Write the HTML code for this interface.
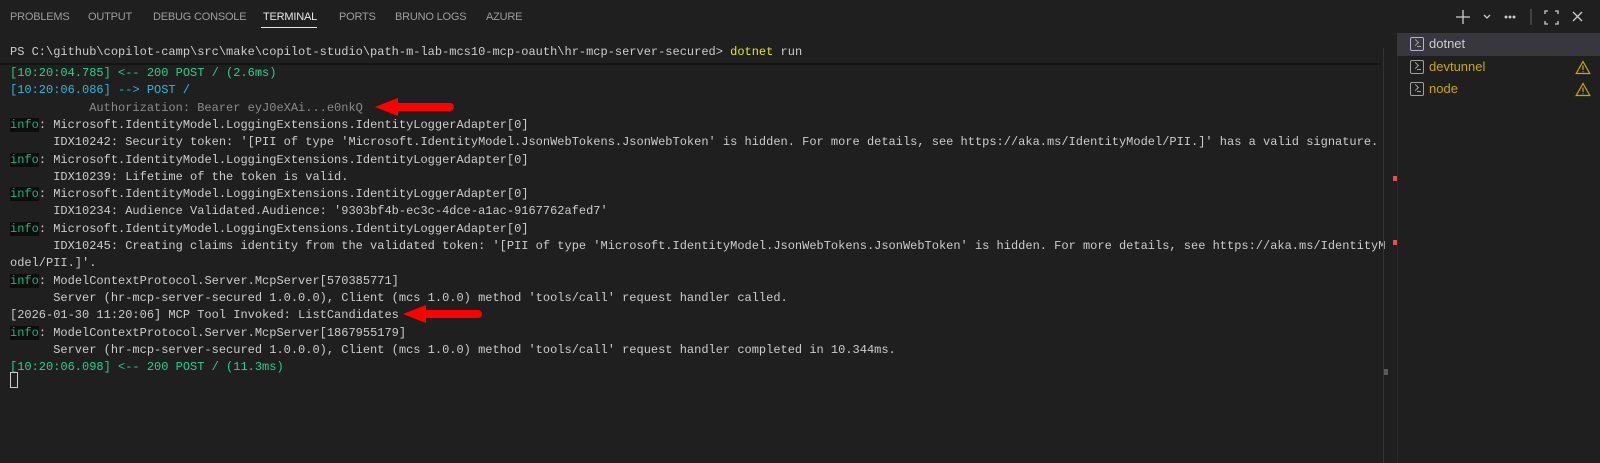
<!DOCTYPE html>
<html><head><meta charset="utf-8"><style>
body{margin:0;width:1600px;height:463px;background:#1f1f1f;overflow:hidden;position:relative;font-family:"Liberation Sans",sans-serif}
.tab{position:absolute;top:11px;font-size:11px;color:#9d9d9d;letter-spacing:-0.2px}
.tab.a{color:#e7e7e7}
.ln{position:absolute;left:10px;font-family:"Liberation Mono",monospace;font-size:12px;line-height:17px;white-space:pre;color:#cccccc}
.g{color:#23d18b}.c{color:#29b8db}.gr{color:#8b8b8b}.y{color:#e5e510}
.info{color:#0dbc79;background:#0c0c0c}
.row{position:absolute;left:1397px;width:203px;height:22px;font-size:13px;line-height:22px}
.row .t{position:absolute;left:32px}
.ic{position:absolute;left:13px;top:4px;width:12px;height:12px;border:1px solid #a0a0a0;border-radius:2px}
.ic:after{content:"";position:absolute;left:2px;top:2px;width:4px;height:4px;border-right:1.2px solid #a0a0a0;border-bottom:1.2px solid #a0a0a0;transform:rotate(-45deg)}
.ic:before{content:"";position:absolute;left:6px;top:8px;width:4px;height:1.2px;background:#a0a0a0}
.w{position:absolute;left:178px;top:4px}
</style></head><body>
<div class="tab" style="left:10px">PROBLEMS</div>
<div class="tab" style="left:88px">OUTPUT</div>
<div class="tab" style="left:153px">DEBUG CONSOLE</div>
<div class="tab a" style="left:263px">TERMINAL</div>
<div style="position:absolute;left:261px;top:27px;width:56px;height:1px;background:#e7e7e7"></div>
<div class="tab" style="left:339px">PORTS</div>
<div class="tab" style="left:395px">BRUNO LOGS</div>
<div class="tab" style="left:486px">AZURE</div>

<svg style="position:absolute;left:1455px;top:4px" width="140" height="26" viewBox="0 0 140 26" fill="none" stroke="#cccccc" stroke-width="1.3">
<path d="M8 6v14M1 13h14"/><path d="M29 11l3 3 3-3"/>
<circle cx="51" cy="13" r="0.8" fill="#ccc"/><circle cx="55" cy="13" r="0.8" fill="#ccc"/><circle cx="59" cy="13" r="0.8" fill="#ccc"/>
<path d="M76 5v16" stroke="#555"/>
<path d="M90 10V7h3M100 7h3v3M103 17v3h-3M93 20h-3v-3"/>
<path d="M118 8l9 9M127 8l-9 9"/>
</svg>

<div class="ln" style="top:44px">PS C:\github\copilot-camp\src\make\copilot-studio\path-m-lab-mcs10-mcp-oauth\hr-mcp-server-secured&gt; <span class="y">dotnet</span> run</div>
<div style="position:absolute;left:0;top:63px;width:1381px;height:2px;background:#141414"></div>
<div class="ln g" style="top:65px">[10:20:04.785] &lt;-- 200 POST / (2.6ms)</div>
<div class="ln c" style="top:82px">[10:20:06.086] --&gt; POST /</div>
<div class="ln gr" style="top:99.5px">           Authorization: Bearer eyJ0eXAi...e0nkQ</div>
<div class="ln" style="top:117px"><span class="info">info</span>: Microsoft.IdentityModel.LoggingExtensions.IdentityLoggerAdapter[0]</div>
<div class="ln" style="top:134px">      IDX10242: Security token: '[PII of type 'Microsoft.IdentityModel.JsonWebTokens.JsonWebToken' is hidden. For more details, see https://aka.ms/IdentityModel/PII.]' has a valid signature.</div>
<div class="ln" style="top:151.5px"><span class="info">info</span>: Microsoft.IdentityModel.LoggingExtensions.IdentityLoggerAdapter[0]</div>
<div class="ln" style="top:169px">      IDX10239: Lifetime of the token is valid.</div>
<div class="ln" style="top:186px"><span class="info">info</span>: Microsoft.IdentityModel.LoggingExtensions.IdentityLoggerAdapter[0]</div>
<div class="ln" style="top:203px">      IDX10234: Audience Validated.Audience: '9303bf4b-ec3c-4dce-a1ac-9167762afed7'</div>
<div class="ln" style="top:220.5px"><span class="info">info</span>: Microsoft.IdentityModel.LoggingExtensions.IdentityLoggerAdapter[0]</div>
<div class="ln" style="top:238px">      IDX10245: Creating claims identity from the validated token: '[PII of type 'Microsoft.IdentityModel.JsonWebTokens.JsonWebToken' is hidden. For more details, see https://aka.ms/IdentityM</div>
<div class="ln" style="top:255px">odel/PII.]'.</div>
<div class="ln" style="top:272.5px"><span class="info">info</span>: ModelContextProtocol.Server.McpServer[570385771]</div>
<div class="ln" style="top:290px">      Server (hr-mcp-server-secured 1.0.0.0), Client (mcs 1.0.0) method 'tools/call' request handler called.</div>
<div class="ln" style="top:307px">[2026-01-30 11:20:06] MCP Tool Invoked: ListCandidates</div>
<div class="ln" style="top:324.5px"><span class="info">info</span>: ModelContextProtocol.Server.McpServer[1867955179]</div>
<div class="ln" style="top:342px">      Server (hr-mcp-server-secured 1.0.0.0), Client (mcs 1.0.0) method 'tools/call' request handler completed in 10.344ms.</div>
<div class="ln g" style="top:359px">[10:20:06.098] &lt;-- 200 POST / (11.3ms)</div>
<div style="position:absolute;left:10px;top:372px;width:6px;height:14px;border:1px solid #cccccc"></div>

<svg style="position:absolute;left:0;top:0" width="600" height="463">
<path d="M375 107L398 98V103H450a4 4 0 0 1 0 8H398V116Z" fill="#f00"/>
<path d="M403 314L426 305V310H478a4 4 0 0 1 0 8H426V323Z" fill="#f00"/>
</svg>

<div style="position:absolute;left:1383px;top:48px;width:1px;height:415px;background:#333"></div>
<div style="position:absolute;left:1397px;top:33px;width:1px;height:430px;background:#2b2b2b"></div>
<div style="position:absolute;left:1393px;top:176px;width:4px;height:5px;background:#f14c4c"></div>
<div style="position:absolute;left:1393px;top:240px;width:4px;height:5px;background:#f14c4c"></div>
<div style="position:absolute;left:1384px;top:369px;width:4px;height:6px;background:#5a5a5a"></div>

<div class="row" style="top:33px;height:23px;background:#37373d;color:#cccccc"><span class="ic" style="border-color:#b8b0d8"></span><span class="t">dotnet</span></div>
<div class="row" style="top:56px;color:#cca700"><span class="ic"></span><span class="t">devtunnel</span><svg class="w" width="16" height="15" viewBox="0 0 16 15" fill="none" stroke="#cca700" stroke-width="1.2"><path d="M8 1.5L14.8 13.5H1.2Z"/><path d="M8 5.5v4.5M8 11.2v1"/></svg></div>
<div class="row" style="top:78px;color:#cca700"><span class="ic"></span><span class="t">node</span><svg class="w" width="16" height="15" viewBox="0 0 16 15" fill="none" stroke="#cca700" stroke-width="1.2"><path d="M8 1.5L14.8 13.5H1.2Z"/><path d="M8 5.5v4.5M8 11.2v1"/></svg></div>
</body></html>
